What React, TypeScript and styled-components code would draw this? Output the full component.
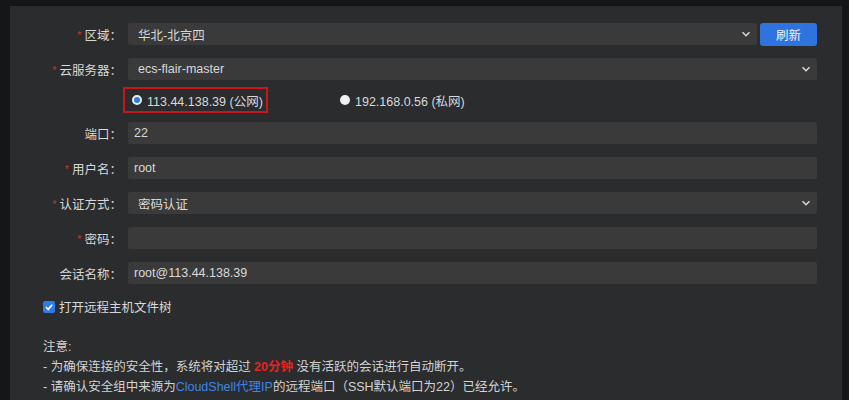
import React from 'react'
import styled, {createGlobalStyle} from 'styled-components'

const GlobalStyle = createGlobalStyle`
    body {
        margin: 0;
        background: #151618;
        font-family: "Liberation Sans", "Noto Sans CJK SC", sans-serif;
        font-size: 12.5px;
        color: #d6d6d6;
    }
`

const Page = styled.div`
    height: 400px;
    overflow: hidden;
    padding: 6px 7px 0 10px;
    box-sizing: border-box;
`
const Panel = styled.div`
    background: #2b2c2e;
    padding: 17px 25px 20px 0;
    min-height: 420px;
`
const Row = styled.div`
    display: flex;
    align-items: center;
    height: 22px;
    margin-bottom: 13px;
`
const Label = styled.div`
    width: 118px;
    flex: none;
    padding-right: 6px;
    box-sizing: border-box;
    text-align: right;
    color: #d8d8d8;
`
const Star = styled.span`
    color: #c23a34;
    font-size: 11px;
    margin-right: 3px;
    vertical-align: 1px;
`
const Field = styled.div<{$select?: boolean}>`
    flex: 1;
    height: 22px;
    display: flex;
    align-items: center;
    justify-content: space-between;
    background: #3a3a3b;
    border-radius: 2px;
    padding: 0 ${p => (p.$select ? '6px' : '8px')} 0 ${p => (p.$select ? '10px' : '6px')};
    box-sizing: border-box;
    color: #d8d8d8;
`
const Chevron = styled.svg`
    width: 10px;
    height: 10px;
    flex: none;
`
const RefreshButton = styled.div`
    margin-left: 3px;
    width: 57px;
    height: 23px;
    border-radius: 3px;
    background: #2f74de;
    color: #eef3ff;
    display: flex;
    align-items: center;
    justify-content: center;
`
const RadioRow = styled.div`
    display: flex;
    align-items: center;
    height: 26px;
    margin: -6px 0 9px 113px;
`
const HighlightBox = styled.div`
    display: flex;
    align-items: center;
    height: 26px;
    padding: 0 0 0 7px;
    width: 145px;
    box-sizing: border-box;
    border: 2px solid #c8171c;
`
const RadioOption = styled.label<{$offset?: number}>`
    display: flex;
    align-items: center;
    margin-left: ${p => p.$offset || 0}px;
    color: #d8d8d8;
`
const RadioDot = styled.span<{$checked?: boolean}>`
    width: 10px;
    height: 10px;
    border-radius: 50%;
    box-sizing: border-box;
    margin-right: 5px;
    background: ${p => (p.$checked ? '#2c7be5' : '#f2f2f2')};
    border: ${p => (p.$checked ? '2px solid #e8eef8' : 'none')};
`
const CheckRow = styled.div`
    display: flex;
    align-items: center;
    margin: 9px 0 0 33px;
    color: #d8d8d8;
`
const CheckBox = styled.span`
    width: 12px;
    height: 12px;
    border-radius: 2px;
    background: #2f7be8;
    display: flex;
    align-items: center;
    justify-content: center;
    margin-right: 4px;
`
const Notes = styled.div`
    margin: 21px 0 0 33px;
    line-height: 20px;
    color: #d2d2d2;
`
const Red = styled.span`
    color: #e8231f;
    font-weight: bold;
`
const Link = styled.span`
    color: #3c86e8;
`

const DownIcon = () => (
    <Chevron viewBox="0 0 10 10">
        <path d="M1.5 3.2 L5 6.7 L8.5 3.2" fill="none" stroke="#d6d6d6" strokeWidth="1.6"/>
    </Chevron>
)

interface FieldRowProps {
    label: string
    required?: boolean
    value?: string
    select?: boolean
    children?: React.ReactNode
}

const FieldRow = ({label, required, value, select, children}: FieldRowProps) => (
    <Row>
        <Label>{required && <Star>*</Star>}{label}：</Label>
        <Field $select={select}>
            <span>{value}</span>
            {select && <DownIcon/>}
        </Field>
        {children}
    </Row>
)

export default function App() {
    return (
        <Page>
            <GlobalStyle/>
            <Panel>
                <FieldRow label="区域" required value="华北-北京四" select>
                    <RefreshButton>刷新</RefreshButton>
                </FieldRow>
                <FieldRow label="云服务器" required value="ecs-flair-master" select/>
                <RadioRow>
                    <HighlightBox>
                        <RadioOption>
                            <RadioDot $checked/>113.44.138.39 (公网)
                        </RadioOption>
                    </HighlightBox>
                    <RadioOption $offset={72}>
                        <RadioDot/>192.168.0.56 (私网)
                    </RadioOption>
                </RadioRow>
                <FieldRow label="端口" value="22"/>
                <FieldRow label="用户名" required value="root"/>
                <FieldRow label="认证方式" required value="密码认证" select/>
                <FieldRow label="密码" required value=""/>
                <FieldRow label="会话名称" value="root@113.44.138.39"/>
                <CheckRow>
                    <CheckBox>
                        <svg width="10" height="10" viewBox="0 0 10 10">
                            <path d="M2 5.2 L4.2 7.4 L8.2 2.8" fill="none" stroke="#fff" strokeWidth="1.7"/>
                        </svg>
                    </CheckBox>
                    打开远程主机文件树
                </CheckRow>
                <Notes>
                    <div>注意:</div>
                    <div>- 为确保连接的安全性，系统将对超过 <Red>20分钟</Red> 没有活跃的会话进行自动断开。</div>
                    <div>- 请确认安全组中来源为<Link>CloudShell代理IP</Link>的远程端口（SSH默认端口为22）已经允许。</div>
                    <div>- 如果连接失败，请检查云服务器是否开启了SSH服务并允许密码登录。</div>
                </Notes>
            </Panel>
        </Page>
    )
}
